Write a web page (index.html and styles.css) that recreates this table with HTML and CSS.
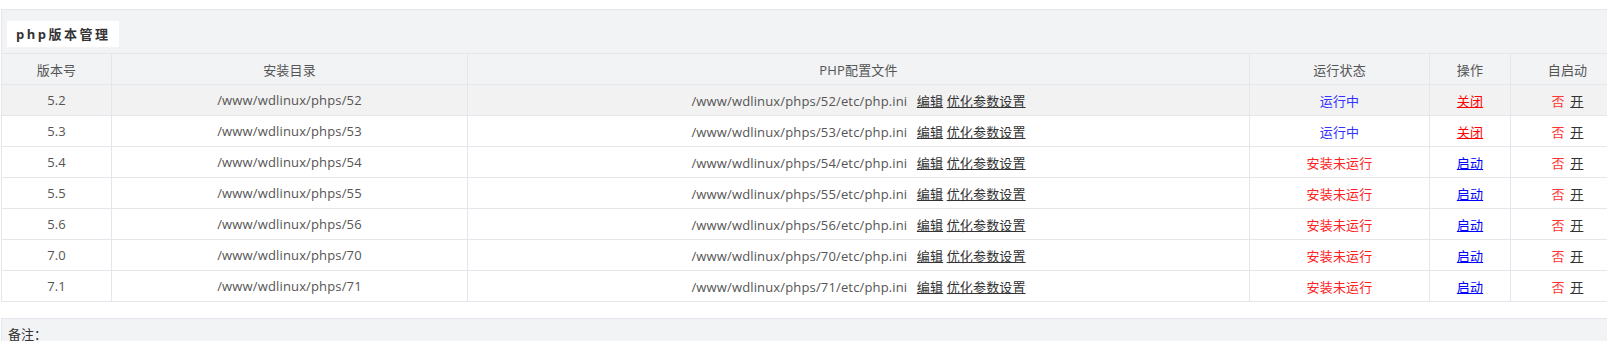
FILE: index.html
```html
<!DOCTYPE html>
<html lang="zh-CN">
<head>
<meta charset="utf-8">
<title>php版本管理</title>
<link rel="stylesheet" href="styles.css">
</head>
<body>
<div class="page">
  <div class="panel">
    <div class="panel-head">
      <div class="title">php版本管理</div>
    </div>
    <table class="grid">
      <colgroup>
        <col class="c-ver"><col class="c-dir"><col class="c-ini"><col class="c-state"><col class="c-op"><col class="c-auto">
      </colgroup>
      <thead>
        <tr><th>版本号</th><th>安装目录</th><th>PHP配置文件</th><th>运行状态</th><th>操作</th><th>自启动</th></tr>
      </thead>
      <tbody>
        <tr class="hover">
          <td>5.2</td><td>/www/wdlinux/phps/52</td>
          <td>/www/wdlinux/phps/52/etc/php.ini <a class="lk edit" href="#">编辑</a> <a class="lk" href="#">优化参数设置</a></td>
          <td class="run">运行中</td><td><a class="lk off" href="#">关闭</a></td>
          <td><span class="no">否</span> <a class="lk on" href="#">开</a></td>
        </tr>
        <tr>
          <td>5.3</td><td>/www/wdlinux/phps/53</td>
          <td>/www/wdlinux/phps/53/etc/php.ini <a class="lk edit" href="#">编辑</a> <a class="lk" href="#">优化参数设置</a></td>
          <td class="run">运行中</td><td><a class="lk off" href="#">关闭</a></td>
          <td><span class="no">否</span> <a class="lk on" href="#">开</a></td>
        </tr>
        <tr>
          <td>5.4</td><td>/www/wdlinux/phps/54</td>
          <td>/www/wdlinux/phps/54/etc/php.ini <a class="lk edit" href="#">编辑</a> <a class="lk" href="#">优化参数设置</a></td>
          <td class="stop">安装未运行</td><td><a class="lk start" href="#">启动</a></td>
          <td><span class="no">否</span> <a class="lk on" href="#">开</a></td>
        </tr>
        <tr>
          <td>5.5</td><td>/www/wdlinux/phps/55</td>
          <td>/www/wdlinux/phps/55/etc/php.ini <a class="lk edit" href="#">编辑</a> <a class="lk" href="#">优化参数设置</a></td>
          <td class="stop">安装未运行</td><td><a class="lk start" href="#">启动</a></td>
          <td><span class="no">否</span> <a class="lk on" href="#">开</a></td>
        </tr>
        <tr>
          <td>5.6</td><td>/www/wdlinux/phps/56</td>
          <td>/www/wdlinux/phps/56/etc/php.ini <a class="lk edit" href="#">编辑</a> <a class="lk" href="#">优化参数设置</a></td>
          <td class="stop">安装未运行</td><td><a class="lk start" href="#">启动</a></td>
          <td><span class="no">否</span> <a class="lk on" href="#">开</a></td>
        </tr>
        <tr>
          <td>7.0</td><td>/www/wdlinux/phps/70</td>
          <td>/www/wdlinux/phps/70/etc/php.ini <a class="lk edit" href="#">编辑</a> <a class="lk" href="#">优化参数设置</a></td>
          <td class="stop">安装未运行</td><td><a class="lk start" href="#">启动</a></td>
          <td><span class="no">否</span> <a class="lk on" href="#">开</a></td>
        </tr>
        <tr>
          <td>7.1</td><td>/www/wdlinux/phps/71</td>
          <td>/www/wdlinux/phps/71/etc/php.ini <a class="lk edit" href="#">编辑</a> <a class="lk" href="#">优化参数设置</a></td>
          <td class="stop">安装未运行</td><td><a class="lk start" href="#">启动</a></td>
          <td><span class="no">否</span> <a class="lk on" href="#">开</a></td>
        </tr>
      </tbody>
    </table>
  </div>
  <div class="notes">备注：</div>
</div>
</body>
</html>
```

FILE: styles.css
```css
html, body {
  margin: 0;
  padding: 0;
  background: #fff;
  overflow: hidden;
}
body {
  font-family: "Open Sans", "Noto Sans CJK SC", sans-serif;
  font-size: 13px;
  color: #555;
}
.page {
  width: 1624px;
  padding-left: 1px;
}
.panel {
  margin-top: 9px;
  background: #f2f3f5;
}
.panel-head {
  border-top: 1px solid #e4e6eb;
  border-left: 1px solid #e4e6eb;
  padding: 11px 0 6px 5px;
}
.title {
  width: 112px;
  height: 26px;
  box-sizing: border-box;
  background: #fff;
  padding-left: 9px;
  font-weight: bold;
  color: #333;
  letter-spacing: 2.5px;
  line-height: 26px;
}
.grid {
  border-collapse: collapse;
  width: 1623px;
  table-layout: fixed;
  background: #fff;
}
.c-ver { width: 110px; }
.c-dir { width: 356px; }
.c-ini { width: 782px; }
.c-state { width: 180px; }
.c-op { width: 81px; }
.c-auto { width: 114px; }
.grid th, .grid td {
  border: 1px solid #e4e6eb;
  height: 30px;
  padding: 0;
  text-align: center;
  vertical-align: middle;
  font-weight: normal;
  white-space: nowrap;
  letter-spacing: 0.15px;
}
.grid th {
  background: #f2f3f5;
  color: #555;
}
.grid tr.hover td {
  background: #f2f2f2;
}
.lk {
  color: #333;
  text-decoration: underline;
}
.edit { margin-left: 6px; }
.off { color: #f00; }
.start { color: #00f; }
.run { color: #33f; }
.stop { color: #f22; }
.no { color: #f33; margin-right: 2px; }
.on { color: #333; }
.notes {
  margin-top: 16px;
  border-top: 1px solid #e4e6eb;
  border-left: 1px solid #e4e6eb;
  background: #f2f3f5;
  padding: 5px 6px 0;
  color: #333;
  height: 30px;
  line-height: 20px;
}
```
